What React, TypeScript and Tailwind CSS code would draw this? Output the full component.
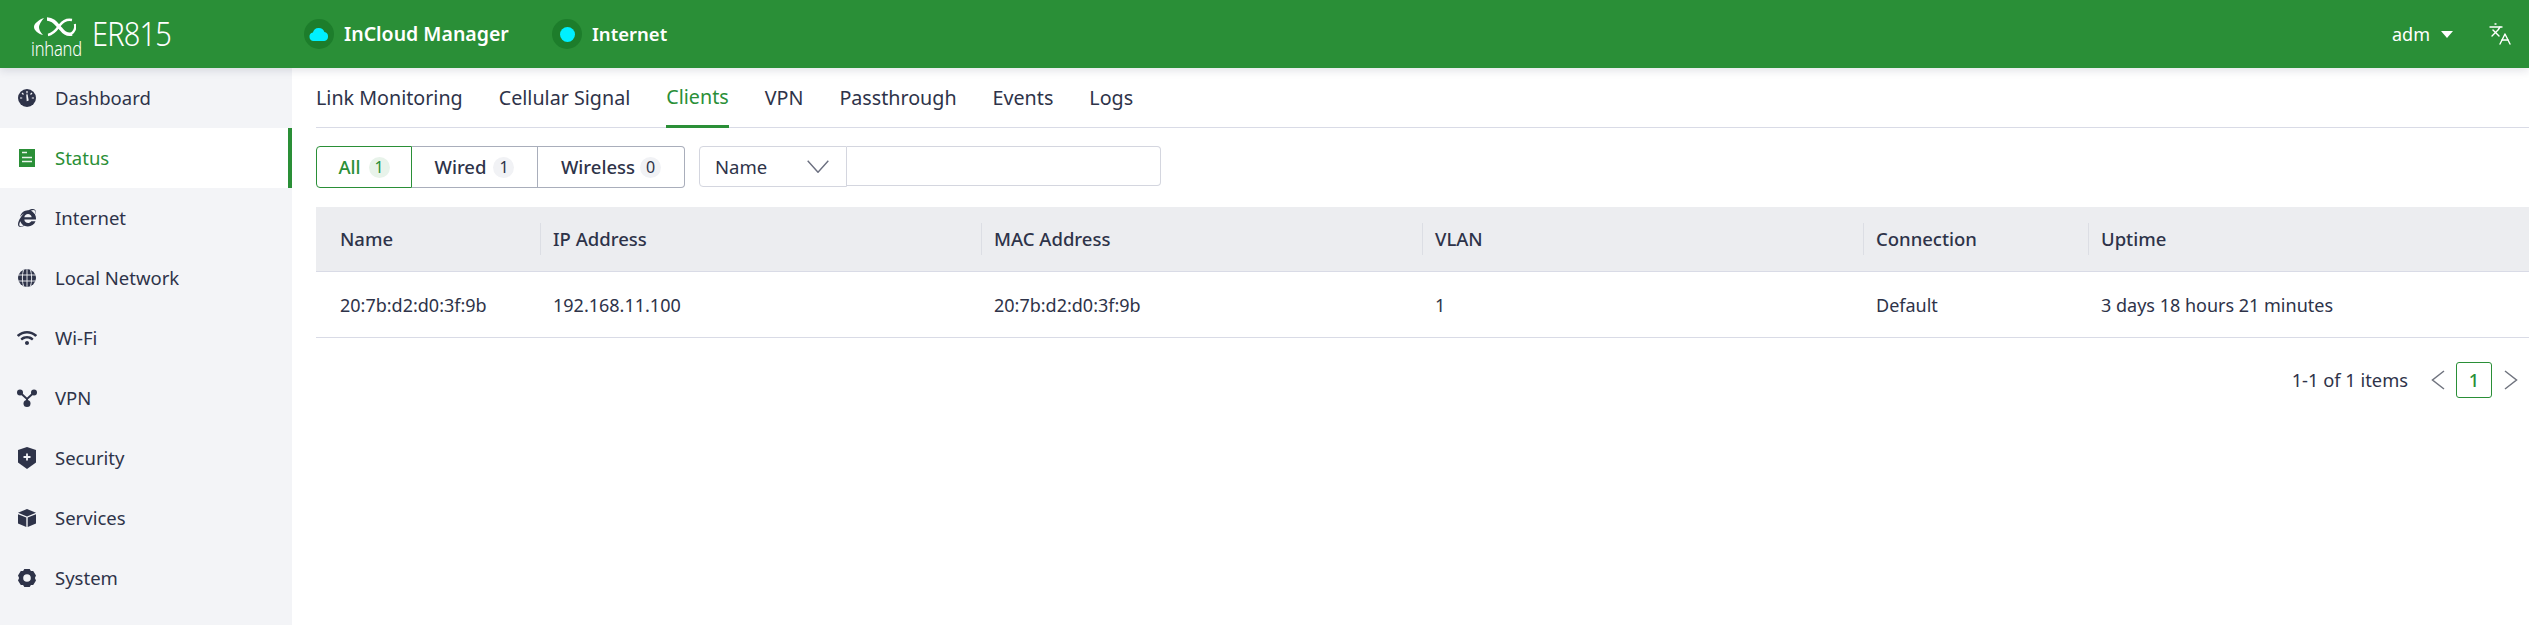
import { Languages } from 'lucide-react';
import { FaInternetExplorer, FaWifi } from 'react-icons/fa';
import type { ReactNode } from 'react';

function DashboardIcon() {
  return (
    <svg viewBox="0 0 18 18" className="w-[18px] h-[18px]">
      <circle cx="9" cy="9" r="9" fill="currentColor" />
      <path d="M9 2v2.200M4 4l1.500 1.500M14 4l-1.500 1.500M2 9h2.200M13.800 9H16" stroke="#f3f4f7" strokeWidth="1.200" />
      <path d="M8.200 5.500l1.400-.2 1.100 6.200-2 .8z" fill="#f3f4f7" />
    </svg>
  );
}

function StatusIcon() {
  return (
    <svg viewBox="0 0 16 18" className="w-4 h-[18px]">
      <rect width="16" height="18" fill="#2a8f37" />
      <path d="M3 3.500h5M3 8.500h10M3 12.500h10" stroke="#fff" strokeWidth="1.400" opacity="0.9" />
    </svg>
  );
}

function GlobeIcon() {
  return (
    <svg viewBox="0 0 18 18" className="w-[18px] h-[18px]">
      <circle cx="9" cy="9" r="9" fill="currentColor" />
      <path d="M0 6h18M0 12h18M9 0v18M5.500 1C4 5 4 13 5.500 17M12.500 1c1.500 4 1.500 12 0 16" stroke="#f3f4f7" strokeWidth="0.900" fill="none" />
    </svg>
  );
}

function VpnIcon() {
  return (
    <svg viewBox="0 0 20 18" className="w-5 h-[18px]">
      <circle cx="3" cy="3.500" r="3" fill="currentColor" />
      <circle cx="17" cy="3.500" r="3" fill="currentColor" />
      <circle cx="10" cy="14.500" r="3.500" fill="currentColor" />
      <path d="M3 3.500l7 6.500 7-6.500M10 10v4" stroke="currentColor" strokeWidth="2" fill="none" />
    </svg>
  );
}

function ShieldIcon() {
  return (
    <svg viewBox="0 0 18 22" className="w-[18px] h-[22px]">
      <path d="M9 0l9 3v12.500L9 22 0 15.500V3z" fill="currentColor" />
      <path d="M9 6.500v7M5.500 10h7" stroke="#f3f4f7" strokeWidth="1.800" />
    </svg>
  );
}

function CubeIcon() {
  return (
    <svg viewBox="0 0 18 18" className="w-[18px] h-[18px]">
      <path d="M9 0l9 3.700L9 7.400 0 3.700z" fill="currentColor" />
      <path d="M0 5.200l8.300 3.400V18L0 14.500z" fill="currentColor" />
      <path d="M18 5.200L9.700 8.600V18l8.300-3.500z" fill="currentColor" />
    </svg>
  );
}

function GearIcon() {
  return (
    <svg viewBox="0 0 18 18" className="w-[18px] h-[18px]">
      <path
        fillRule="evenodd"
        d="M6.300 0h5.400l1.200 1.900 2.300.1L18 6.600 16.900 9 18 11.400 15.200 16l-2.300.1L11.700 18H6.300l-1.200-1.900-2.300-.1L0 11.400 1.100 9 0 6.600 2.800 2l2.300-.1zM9 5.200a3.800 3.800 0 100 7.600 3.800 3.800 0 000-7.600z"
        fill="currentColor"
      />
    </svg>
  );
}

function Logo() {
  return (
    <div className="relative w-[52px] h-[56px] shrink-0">
      <svg viewBox="0 0 42 20" className="w-[42px] h-5 absolute left-[3px] top-[11px]">
        <path d="M10 1C4 3 0 7 0 10c0 3 4 7 9 8-3-3-4-6-4-8s2-6 5-9z" fill="#fff" />
        <path d="M13 2c7 0 10 6 14 10 3 4 7 6 11 5" stroke="#fff" strokeWidth="3.500" fill="none" />
        <path d="M14 18c6-1 9-6 12-10 3-4 7-6 12-5" stroke="#fff" strokeWidth="2.500" fill="none" />
        <path d="M41 7c1 4-1 8-4 10" stroke="#fff" strokeWidth="2.500" fill="none" />
      </svg>
      <span className="absolute left-0 top-[31px] text-[16.500px] leading-[20px] text-white font-light tracking-[-0.2px] scale-y-[1.2] origin-top">
        inhand
      </span>
    </div>
  );
}

const menu: { label: string; icon: ReactNode; active?: boolean }[] = [
  { label: 'Dashboard', icon: <DashboardIcon /> },
  { label: 'Status', icon: <StatusIcon />, active: true },
  { label: 'Internet', icon: <FaInternetExplorer className="w-[18px] h-[18px]" /> },
  { label: 'Local Network', icon: <GlobeIcon /> },
  { label: 'Wi-Fi', icon: <FaWifi className="w-5 h-5" /> },
  { label: 'VPN', icon: <VpnIcon /> },
  { label: 'Security', icon: <ShieldIcon /> },
  { label: 'Services', icon: <CubeIcon /> },
  { label: 'System', icon: <GearIcon /> },
];

const tabs = ['Link Monitoring', 'Cellular Signal', 'Clients', 'VPN', 'Passthrough', 'Events', 'Logs'];

const columns = [
  { head: 'Name', value: '20:7b:d2:d0:3f:9b' },
  { head: 'IP Address', value: '192.168.11.100' },
  { head: 'MAC Address', value: '20:7b:d2:d0:3f:9b' },
  { head: 'VLAN', value: '1' },
  { head: 'Connection', value: 'Default' },
  { head: 'Uptime', value: '3 days 18 hours 21 minutes' },
];

function App() {
  return (
    <div className="min-h-screen flex flex-col bg-white text-[18.500px] text-[#2e3349] font-['Noto_Sans',sans-serif] overflow-hidden">
      <header className="relative z-10 h-[68px] shrink-0 bg-[#2a8f37] text-white flex items-center shadow-[0_3px_8px_rgba(30,40,70,0.12)]">
        <div className="w-[304px] pl-[31px] flex items-center shrink-0">
          <Logo />
          <span className="ml-[9px] text-[29px] font-light tracking-[-0.8px] scale-y-[1.12]">ER815</span>
        </div>
        <div className="flex items-center gap-[10px]">
          <span className="w-[30px] h-[30px] rounded-full bg-[#1d7d2b] flex items-center justify-center">
            <svg viewBox="0 0 20 14" className="w-5 h-[14px]">
              <path d="M4.500 14a4.300 4.300 0 01-.6-8.500A6 6 0 0115.400 5a4.600 4.600 0 010 9z" fill="#00f0ff" />
            </svg>
          </span>
          <span className="w-[166px] text-[19.500px] font-semibold whitespace-nowrap">InCloud Manager</span>
        </div>
        <div className="ml-[42px] flex items-center gap-[10px]">
          <span className="w-[30px] h-[30px] rounded-full bg-[#1d7d2b] flex items-center justify-center">
            <span className="w-[15px] h-[15px] rounded-full bg-[#00f0ff]" />
          </span>
          <span className="font-semibold">Internet</span>
        </div>
        <div className="ml-auto flex items-center">
          <span className="text-[18px]">adm</span>
          <span className="ml-[11px] w-0 h-0 border-x-[6px] border-x-transparent border-t-[7px] border-t-white" />
          <Languages className="ml-[35px] mr-[17px] w-[24px] h-[24px]" strokeWidth={1.400} />
        </div>
      </header>

      <div className="flex flex-1">
        <aside className="w-[292px] shrink-0 bg-[#f3f4f7]">
          {menu.map((item) => (
            <div
              key={item.label}
              className={
                item.active
                  ? 'h-[60px] flex items-center bg-white text-[#2a8f37] border-r-4 border-[#2a8f37]'
                  : 'h-[60px] flex items-center'
              }
            >
              <span className="w-[55px] pr-[9px] pl-[9px] flex justify-center shrink-0 -translate-x-[1px]">{item.icon}</span>
              {item.label}
            </div>
          ))}
        </aside>

        <main className="flex-1 min-w-0 pl-6">
          <nav className="h-[60px] flex gap-[36px] border-b border-[#d9dbe6] text-[19.700px]">
            {tabs.map((tab) => (
              <div
                key={tab}
                className={
                  tab === 'Clients'
                    ? 'h-[60px] flex items-center text-[#2a8f37] border-b-[3px] border-[#2a8f37]'
                    : 'h-[60px] flex items-center'
                }
              >
                {tab}
              </div>
            ))}
          </nav>

          <div className="mt-[18px] flex items-start">
            <div className="flex h-[42px] font-medium">
              <div className="w-[96px] flex items-center justify-center gap-[8px] border border-[#2a8f37] rounded-l text-[#2a8f37]">
                All
                <span className="w-[21px] h-[21px] rounded-full bg-[#e8f3ea] flex items-center justify-center text-[16px] font-normal">1</span>
              </div>
              <div className="w-[126px] flex items-center justify-center gap-[7px] border-y border-r border-[#a9aebb]">
                Wired
                <span className="w-[21px] h-[21px] rounded-full bg-[#f1f2f5] flex items-center justify-center text-[16px] font-normal">1</span>
              </div>
              <div className="w-[147px] flex items-center justify-center gap-[5px] border-y border-r border-[#a9aebb] rounded-r">
                Wireless
                <span className="w-[21px] h-[21px] rounded-full bg-[#f1f2f5] flex items-center justify-center text-[16px] font-normal">0</span>
              </div>
            </div>
            <div className="ml-[14px] w-[148px] h-[41px] pl-[15px] pr-[17px] flex items-center justify-between border border-[#d4d6df] rounded-l">
              Name
              <svg viewBox="0 0 22 13" className="w-[22px] h-[13px]">
                <path d="M.7.7L11 12.300 21.300.7" stroke="#6c7080" strokeWidth="1.400" fill="none" />
              </svg>
            </div>
            <div className="w-[314px] h-[40px] border-y border-r border-[#d4d6df] rounded-r" />
          </div>

          <div className="mt-[19px] grid grid-cols-[225px_441px_441px_441px_225px_1fr]">
            {columns.map((col, i) => (
              <div
                key={col.head}
                className={
                  i === 0
                    ? 'h-[65px] bg-[#ecedf0] border-b border-[#d9dbe6] flex items-center pl-[24px] relative font-medium'
                    : 'h-[65px] bg-[#ecedf0] border-b border-[#d9dbe6] flex items-center pl-[12px] relative font-medium'
                }
              >
                {col.head}
                {i < 5 && <span className="absolute right-0 top-[16px] h-[32px] w-px bg-[#dcdee4]" />}
              </div>
            ))}
            {columns.map((col, i) => (
              <div
                key={col.head}
                className={
                  i === 0
                    ? 'h-[66px] border-b border-[#d9dbe6] flex items-center pl-[24px] pt-[2px] text-[18px]'
                    : 'h-[66px] border-b border-[#d9dbe6] flex items-center pl-[12px] pt-[2px] text-[18px]'
                }
              >
                {col.value}
              </div>
            ))}
          </div>

          <div className="mt-[24px] flex items-center justify-end text-[18.300px]">
            <span>1-1 of 1 items</span>
            <svg viewBox="0 0 14 20" className="ml-[23px] w-[14px] h-5">
              <path d="M13 1L1.500 10 13 19" stroke="#70747f" strokeWidth="1.500" fill="none" />
            </svg>
            <span className="ml-[11px] w-[36px] h-[36px] border border-[#2a8f37] rounded-[3px] text-[#2a8f37] font-medium flex items-center justify-center">1</span>
            <svg viewBox="0 0 14 20" className="ml-[12px] mr-[11px] w-[14px] h-5">
              <path d="M1 1l11.500 9L1 19" stroke="#70747f" strokeWidth="1.500" fill="none" />
            </svg>
          </div>
        </main>
      </div>
    </div>
  );
}

export default App;
